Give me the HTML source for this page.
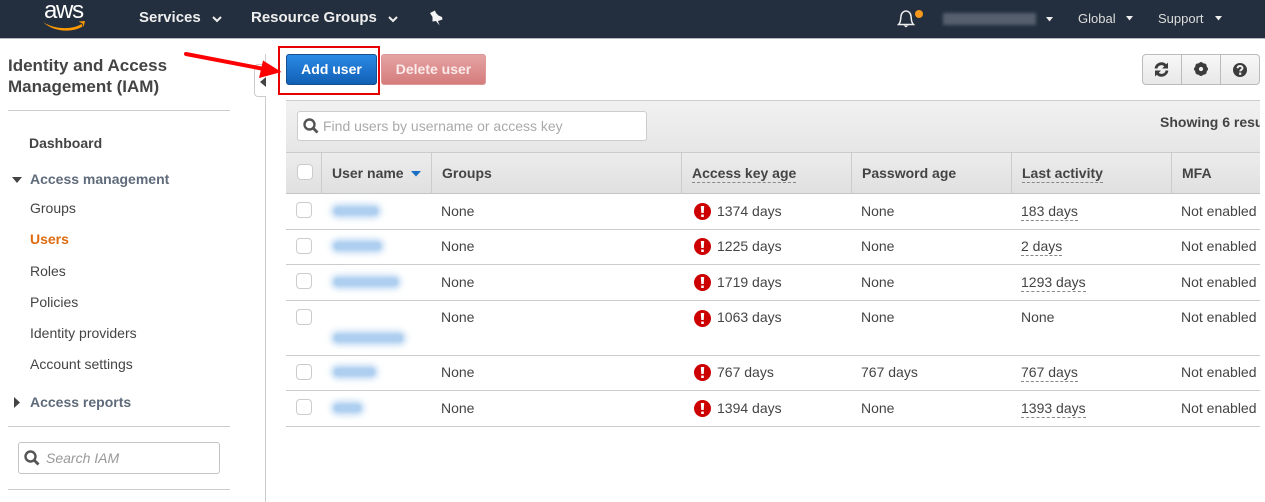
<!DOCTYPE html>
<html><head><meta charset="utf-8"><style>
*{box-sizing:border-box}
html,body{margin:0;padding:0;width:1265px;height:502px;overflow:hidden;background:#fff}
body{font-family:"Liberation Sans",sans-serif;font-size:14px;color:#444;position:relative}
.a{position:absolute;white-space:nowrap;line-height:16px}
.b{font-weight:bold}
.nav{color:#eee}
.side{color:#444;left:30px}
.hd{position:absolute;top:152px;height:42px;border-right:1px solid #ccc}
.th{position:absolute;top:165px;font-weight:bold;color:#444;line-height:16px;white-space:nowrap}
.dash{border-bottom:1px dashed #888;padding-bottom:1px}
.line{position:absolute;left:286px;width:974px;height:1px;background:#ccc}
.cb{position:absolute;left:296px;width:16px;height:16px;border:1px solid #ccc;border-radius:4px;background:#fff}
.blur{position:absolute;height:8px;margin-top:2px;background:#aecff0;border-radius:4px;box-shadow:0 0 6px 3px rgba(174,207,240,.85);filter:blur(1px);left:334px}
.err{position:absolute;left:693.500px;width:17px;height:17px}
</style></head><body>
<div class="a" style="left:0;top:0;width:1265px;height:39px;background:#232f3e;border-bottom:1px solid #b5b8bc"></div>
<div class="a" style="left:44px;top:2px;font-size:24px;line-height:18px;color:#fff;letter-spacing:-1.300px">aws</div>
<svg class="a" style="left:42px;top:20px" width="44" height="12" viewBox="0 0 44 12"><path d="M1 2C12 9.500 30 10 39.500 4L40.500 6.500C30 13 11 12 1 2z" fill="#f90"/><path d="M36.500 1.500l6.500-.5-1.500 6-1-3.500z" fill="#f90"/></svg>
<div class="a b nav" style="left:139px;top:10px;font-size:15px">Services</div>
<svg class="a" style="left:212px;top:16px" width="10" height="7"><path d="M1 1l4 4 4-4" fill="none" stroke="#eee" stroke-width="2"/></svg>
<div class="a b nav" style="left:251px;top:10px;font-size:15px">Resource Groups</div>
<svg class="a" style="left:388px;top:16px" width="10" height="7"><path d="M1 1l4 4 4-4" fill="none" stroke="#eee" stroke-width="2"/></svg>
<svg class="a" style="left:429px;top:10px" width="14" height="16" viewBox="0 0 14 16"><path d="M1 3L6 .5 7 3l2.500 2.500L13 7l.5 2.500L9 11l1.500 4.500L7 11l-3.500.5V7z" fill="#f4f4f4"/></svg>
<svg class="a" style="left:897px;top:9px" width="18" height="20" viewBox="0 0 18 20"><path d="M1.500 15.500c2-2 2-4 2.500-8.500C4.500 3.500 7 2 9 2s4.500 1.500 5 5c.5 4.500.5 6.500 2.500 8.500z" fill="none" stroke="#eee" stroke-width="1.500"/><path d="M6.500 16.500h5L9 18.500z" fill="#eee"/></svg>
<div class="a" style="left:915px;top:10px;width:8px;height:8px;border-radius:50%;background:#f7981d"></div>
<div class="a" style="left:943px;top:13px;width:93px;height:12px;background:#565f6e;filter:blur(1.500px)"></div>
<svg class="a" style="left:1045px;top:17px" width="9" height="5"><path d="M1 0h7l-3.500 4.500z" fill="#eee"/></svg>
<div class="a nav" style="left:1078px;top:11px;font-size:13px;color:#ddd">Global</div>
<svg class="a" style="left:1125px;top:16px" width="9" height="5"><path d="M1 0h7l-3.500 4.500z" fill="#eee"/></svg>
<div class="a nav" style="left:1158px;top:11px;font-size:13px;color:#ddd">Support</div>
<svg class="a" style="left:1214px;top:16px" width="9" height="5"><path d="M1 0h7l-3.500 4.500z" fill="#eee"/></svg>

<div class="a b" style="left:8px;top:55px;font-size:17px;line-height:21px;color:#444">Identity and Access<br>Management (IAM)</div>
<div class="a" style="left:8px;top:110px;width:222px;height:1px;background:#ccc"></div>
<div class="a b" style="left:29px;top:135px;color:#444">Dashboard</div>
<svg class="a" style="left:12px;top:177px" width="11" height="7"><path d="M0 0h10L5 6z" fill="#444"/></svg>
<div class="a b side" style="top:171px;color:#5f6b7a">Access management</div>
<div class="a side" style="top:200px">Groups</div>
<div class="a side b" style="top:231px;color:#dd6b10">Users</div>
<div class="a side" style="top:263px">Roles</div>
<div class="a side" style="top:294px">Policies</div>
<div class="a side" style="top:325px">Identity providers</div>
<div class="a side" style="top:356px">Account settings</div>
<svg class="a" style="left:14px;top:397px" width="6" height="11"><path d="M0 0l6 5.500-6 5.500z" fill="#444"/></svg>
<div class="a b side" style="top:394px;color:#5f6b7a">Access reports</div>
<div class="a" style="left:8px;top:426px;width:222px;height:1px;background:#ccc"></div>
<div class="a" style="left:18px;top:442px;width:202px;height:32px;border:1px solid #c4c4c4;border-radius:3px"></div>
<svg class="a" style="left:24px;top:450px" width="16" height="17" viewBox="0 0 16 17"><circle cx="6.500" cy="6.500" r="5" fill="none" stroke="#555" stroke-width="2.400"/><path d="M10 10l4.500 4.500" stroke="#555" stroke-width="2.800"/></svg>
<div class="a" style="left:46px;top:450px;font-style:italic;color:#999">Search IAM</div>
<div class="a" style="left:8px;top:489px;width:222px;height:1px;background:#ccc"></div>

<div class="a" style="left:265px;top:54px;width:1px;height:448px;background:#ccc"></div>
<div class="a" style="left:254px;top:64px;width:12px;height:33px;background:#fff;border:1px solid #ccc;border-right:0;border-radius:4px 0 0 4px"></div>
<svg class="a" style="left:260px;top:77px" width="6" height="10"><path d="M6 0v10L0 5z" fill="#444"/></svg>

<div class="a b" style="left:286px;top:54px;width:91px;height:31px;border:1px solid #15508f;border-radius:3px;background:linear-gradient(#2a8ae6,#1260b5);color:#fff;text-align:center;line-height:29px">Add user</div>
<div class="a b" style="left:381px;top:54px;width:105px;height:31px;border:1px solid #d99;border-radius:3px;background:linear-gradient(#e5a3a3,#d57c7c);color:#fbeaea;text-align:center;line-height:29px">Delete user</div>
<div class="a" style="left:278px;top:46px;width:102px;height:49px;border:2px solid #e60000"></div>
<svg class="a" style="left:184px;top:50px" width="100" height="32" viewBox="0 0 100 32"><path d="M2 4L80 19" stroke="#f00" stroke-width="4" stroke-linecap="round"/><path d="M79 10.500L97.500 22 75 28z" fill="#f00"/></svg>

<div class="a" style="left:1142px;top:54px;width:118px;height:31px;border:1px solid #bbb;border-radius:4px;background:linear-gradient(#f8f8f8,#e8e8e8)"></div>
<div class="a" style="left:1181px;top:54px;width:1px;height:31px;background:#bbb"></div>
<div class="a" style="left:1220px;top:54px;width:1px;height:31px;background:#bbb"></div>
<svg class="a" style="left:1154px;top:62px" width="15" height="15" viewBox="0 0 15 15"><path d="M2 6.500A5.500 5.500 0 0 1 11.500 3.500M13 8.500A5.500 5.500 0 0 1 3.500 11.500" fill="none" stroke="#3c3c3c" stroke-width="2.800"/><path d="M14 0.500v6h-6zM1 14.500v-6h6z" fill="#3c3c3c"/></svg>
<svg class="a" style="left:1193px;top:61px" width="16" height="16" viewBox="0 0 15 15"><circle cx="7.500" cy="7.500" r="4.200" fill="none" stroke="#3c3c3c" stroke-width="3.400"/><path d="M7.500 1v13M1 7.500h13M3 3l9 9M12 3l-9 9" stroke="#3c3c3c" stroke-width="2.600"/><circle cx="7.500" cy="7.500" r="2" fill="#efefef"/></svg>
<svg class="a" style="left:1233px;top:63px" width="14" height="14" viewBox="0 0 14 14"><circle cx="7" cy="7" r="7" fill="#3c3c3c"/><path d="M4.500 5.300C4.700 3.700 5.900 3 7 3c1.500 0 2.500.9 2.500 2.100 0 1.600-2.300 1.600-2.300 3.300" fill="none" stroke="#f2f2f2" stroke-width="1.900"/><rect x="6.100" y="9.600" width="2.200" height="2.200" fill="#f2f2f2"/></svg>

<div class="a" style="left:286px;top:100px;width:974px;height:52px;background:linear-gradient(#f1f1f1,#e6e6e6);border-top:1px solid #ccc"></div>
<div class="a" style="left:297px;top:111px;width:350px;height:30px;background:#fff;border:1px solid #ccc;border-radius:3px"></div>
<svg class="a" style="left:303px;top:118px" width="16" height="17" viewBox="0 0 16 17"><circle cx="6.500" cy="6.500" r="5" fill="none" stroke="#555" stroke-width="2.400"/><path d="M10 10l4.500 4.500" stroke="#555" stroke-width="2.800"/></svg>
<div class="a" style="left:323px;top:118px;color:#aaa">Find users by username or access key</div>
<div class="a b" style="left:1160px;top:114px;width:100px;overflow:hidden">Showing 6 results</div>

<div class="a" style="left:286px;top:152px;width:974px;height:42px;background:linear-gradient(#ececec,#e0e0e0);border-top:1px solid #ccc;border-bottom:1px solid #c4c4c4"></div>
<div class="hd" style="left:286px;width:36px"></div>
<div class="hd" style="left:322px;width:110px"></div>
<div class="hd" style="left:432px;width:250px"></div>
<div class="hd" style="left:682px;width:170px"></div>
<div class="hd" style="left:852px;width:160px"></div>
<div class="hd" style="left:1012px;width:160px"></div>
<div class="cb" style="left:297px;top:164px;background:#fff"></div>
<div class="th" style="left:332px">User name</div>
<svg class="a" style="left:411px;top:171px" width="10" height="6"><path d="M0 0h10L5 5.500z" fill="#1a6fc4"/></svg>
<div class="th" style="left:442px">Groups</div>
<div class="th dash" style="left:692px">Access key age</div>
<div class="th" style="left:862px">Password age</div>
<div class="th dash" style="left:1022px">Last activity</div>
<div class="th" style="left:1182px">MFA</div>

<div class="line" style="top:229px"></div>
<div class="line" style="top:264px"></div>
<div class="line" style="top:300px"></div>
<div class="line" style="top:355px"></div>
<div class="line" style="top:390px"></div>
<div class="line" style="top:426px"></div>

<div class="cb" style="top:202px"></div>
<div class="blur" style="top:205px;width:44px"></div>
<div class="a" style="left:441px;top:203px">None</div>
<svg class="err" style="top:203px" viewBox="0 0 17 17"><circle cx="8.500" cy="8.500" r="8.500" fill="#cc0000"/><path d="M6.800 3h3.400l-.5 7H7.300z" fill="#fff"/><rect x="7.200" y="11.500" width="2.600" height="2.500" fill="#fff"/></svg>
<div class="a" style="left:717px;top:203px">1374 days</div>
<div class="a" style="left:861px;top:203px">None</div>
<div class="a dash" style="left:1021px;top:203px">183 days</div>
<div class="a" style="left:1181px;top:203px">Not enabled</div>

<div class="cb" style="top:238px"></div>
<div class="blur" style="top:240px;width:47px"></div>
<div class="a" style="left:441px;top:238px">None</div>
<svg class="err" style="top:238px" viewBox="0 0 17 17"><circle cx="8.500" cy="8.500" r="8.500" fill="#cc0000"/><path d="M6.800 3h3.400l-.5 7H7.300z" fill="#fff"/><rect x="7.200" y="11.500" width="2.600" height="2.500" fill="#fff"/></svg>
<div class="a" style="left:717px;top:238px">1225 days</div>
<div class="a" style="left:861px;top:238px">None</div>
<div class="a dash" style="left:1021px;top:238px">2 days</div>
<div class="a" style="left:1181px;top:238px">Not enabled</div>

<div class="cb" style="top:273px"></div>
<div class="blur" style="top:276px;width:64px"></div>
<div class="a" style="left:441px;top:274px">None</div>
<svg class="err" style="top:274px" viewBox="0 0 17 17"><circle cx="8.500" cy="8.500" r="8.500" fill="#cc0000"/><path d="M6.800 3h3.400l-.5 7H7.300z" fill="#fff"/><rect x="7.200" y="11.500" width="2.600" height="2.500" fill="#fff"/></svg>
<div class="a" style="left:717px;top:274px">1719 days</div>
<div class="a" style="left:861px;top:274px">None</div>
<div class="a dash" style="left:1021px;top:274px">1293 days</div>
<div class="a" style="left:1181px;top:274px">Not enabled</div>

<div class="cb" style="top:309px"></div>
<div class="blur" style="top:332px;width:69px"></div>
<div class="a" style="left:441px;top:309px">None</div>
<svg class="err" style="top:310px" viewBox="0 0 17 17"><circle cx="8.500" cy="8.500" r="8.500" fill="#cc0000"/><path d="M6.800 3h3.400l-.5 7H7.300z" fill="#fff"/><rect x="7.200" y="11.500" width="2.600" height="2.500" fill="#fff"/></svg>
<div class="a" style="left:717px;top:309px">1063 days</div>
<div class="a" style="left:861px;top:309px">None</div>
<div class="a" style="left:1021px;top:309px">None</div>
<div class="a" style="left:1181px;top:309px">Not enabled</div>

<div class="cb" style="top:364px"></div>
<div class="blur" style="top:366px;width:41px"></div>
<div class="a" style="left:441px;top:364px">None</div>
<svg class="err" style="top:364px" viewBox="0 0 17 17"><circle cx="8.500" cy="8.500" r="8.500" fill="#cc0000"/><path d="M6.800 3h3.400l-.5 7H7.300z" fill="#fff"/><rect x="7.200" y="11.500" width="2.600" height="2.500" fill="#fff"/></svg>
<div class="a" style="left:717px;top:364px">767 days</div>
<div class="a" style="left:861px;top:364px">767 days</div>
<div class="a dash" style="left:1021px;top:364px">767 days</div>
<div class="a" style="left:1181px;top:364px">Not enabled</div>

<div class="cb" style="top:399px"></div>
<div class="blur" style="top:402px;width:27px"></div>
<div class="a" style="left:441px;top:400px">None</div>
<svg class="err" style="top:400px" viewBox="0 0 17 17"><circle cx="8.500" cy="8.500" r="8.500" fill="#cc0000"/><path d="M6.800 3h3.400l-.5 7H7.300z" fill="#fff"/><rect x="7.200" y="11.500" width="2.600" height="2.500" fill="#fff"/></svg>
<div class="a" style="left:717px;top:400px">1394 days</div>
<div class="a" style="left:861px;top:400px">None</div>
<div class="a dash" style="left:1021px;top:400px">1393 days</div>
<div class="a" style="left:1181px;top:400px">Not enabled</div>
</body></html>
